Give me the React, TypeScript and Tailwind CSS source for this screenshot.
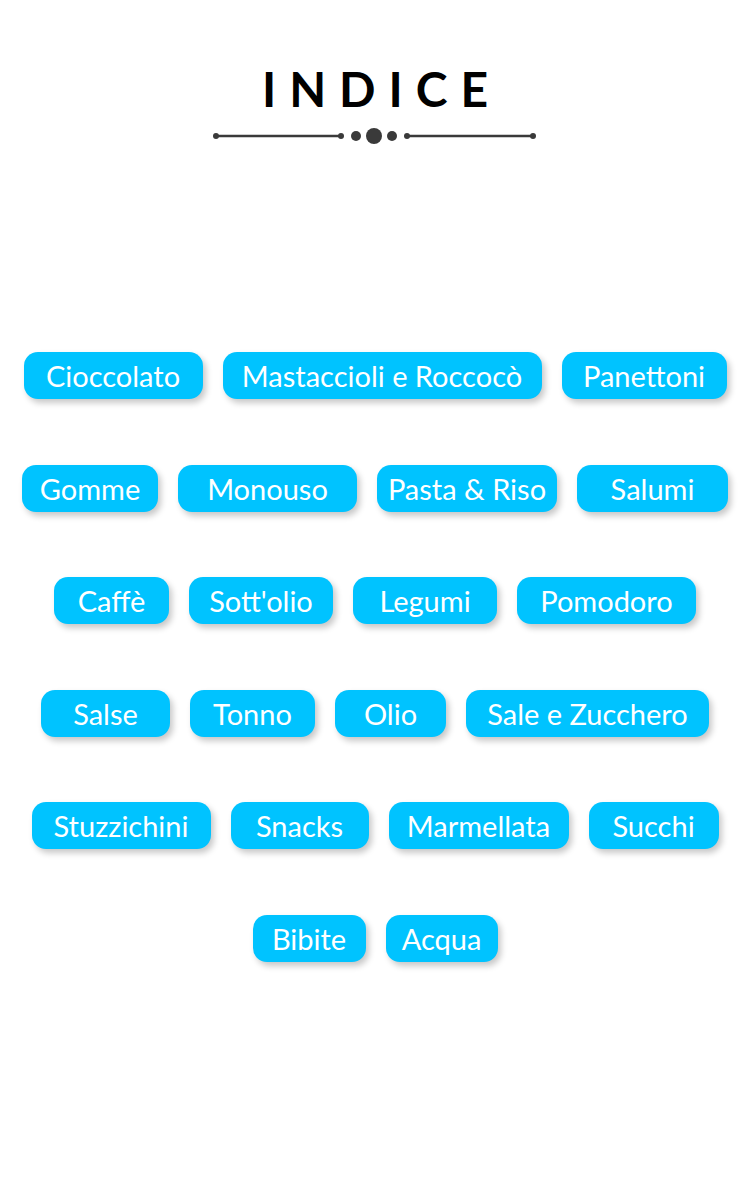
const rows: [string, number][][] = [
  [["Cioccolato", 179], ["Mastaccioli e Roccocò", 319], ["Panettoni", 165]],
  [["Gomme", 136], ["Monouso", 179], ["Pasta & Riso", 180], ["Salumi", 151]],
  [["Caffè", 115], ["Sott'olio", 144], ["Legumi", 144], ["Pomodoro", 179]],
  [["Salse", 129], ["Tonno", 125], ["Olio", 111], ["Sale e Zucchero", 243]],
  [["Stuzzichini", 179], ["Snacks", 138], ["Marmellata", 180], ["Succhi", 130]],
  [["Bibite", 113], ["Acqua", 112]],
];

function Divider() {
  return (
    <svg width="324" height="16" viewBox="0 0 324 16" className="block">
      <g fill="#3a3a3a" stroke="#3a3a3a">
        <line x1="3" y1="8" x2="126" y2="8" strokeWidth="2.5" />
        <line x1="196" y1="8" x2="320" y2="8" strokeWidth="2.5" />
        <circle cx="3" cy="8" r="3" stroke="none" />
        <circle cx="320" cy="8" r="3" stroke="none" />
        <circle cx="128" cy="8" r="3" stroke="none" />
        <circle cx="143" cy="8" r="5" stroke="none" />
        <circle cx="161" cy="8" r="8" stroke="none" />
        <circle cx="179" cy="8" r="5" stroke="none" />
        <circle cx="194" cy="8" r="3" stroke="none" />
      </g>
    </svg>
  );
}

export default function App() {
  return (
    <div className="w-[750px] h-[1200px] bg-white font-['Lato','Liberation_Sans',sans-serif]">
      <div className="flex flex-col items-center pt-[61px]">
        <h1 className="text-[48px] leading-[56px] font-bold text-black tracking-[0.27em] pl-[0.27em]">
          INDICE
        </h1>
        <div className="mt-[11px]">
          <Divider />
        </div>
      </div>

      <div className="flex flex-col gap-[65.5px] mt-[208px]">
        {rows.map((row, i) => (
          <div key={i} className="flex justify-center gap-[20px]">
            {row.map(([label, w]) => (
              <button
                key={label}
                style={{ width: w }}
                className="h-[47px] rounded-[14px] bg-[#00c3ff] text-white text-[29px] leading-none flex items-center justify-center shadow-[3px_4px_6px_rgba(0,0,0,0.22)]"
              >
                {label}
              </button>
            ))}
          </div>
        ))}
      </div>
    </div>
  );
}
